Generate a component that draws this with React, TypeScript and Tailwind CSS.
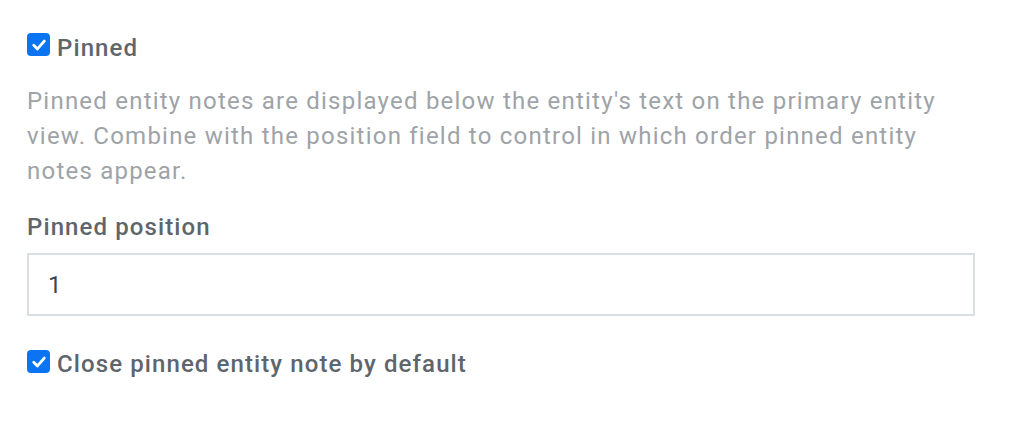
import React from "react";

function Check() {
  return (
    <span className="flex h-[23px] w-[23px] shrink-0 items-center justify-center rounded-[4px] bg-[#0b74f2]">
      <svg viewBox="0 0 16 16" className="h-[18px] w-[18px]" fill="none">
        <path d="M3.3 8.3 L6.6 11.5 L12.7 4.5" stroke="white" strokeWidth="2.5" strokeLinecap="round" strokeLinejoin="round" />
      </svg>
    </span>
  );
}

export default function App() {
  return (
    <div className="min-h-[430px] w-[1023px] bg-white pl-[27px] pr-[48px] pt-[33px] font-['Roboto',sans-serif]">
      <label className="flex items-start gap-[7px]">
        <Check />
        <span className="mt-[3px] text-[24px] font-medium leading-[24px] tracking-[1.1px] text-[#5e666c]">Pinned</span>
      </label>
      <p className="mt-[24px] text-[24px] leading-[35px] tracking-[1.22px] text-[#9ea3a8]">
        Pinned entity notes are displayed below the entity's text on the primary entity view. Combine with the position field to control in which order pinned entity notes appear.
      </p>
      <div className="mt-[26px] text-[24px] font-medium leading-[24px] tracking-[1.1px] text-[#5e666c]">Pinned position</div>
      <div className="mt-[14px] flex h-[63px] items-center border-2 border-[#d9dee2] pl-[19px] text-[24px] leading-[24px] tracking-[1px] text-[#3f464b]">
        1
      </div>
      <label className="mt-[34px] flex items-start gap-[7px]">
        <Check />
        <span className="mt-[2px] text-[24px] font-medium leading-[24px] tracking-[1.1px] text-[#5e666c]">Close pinned entity note by default</span>
      </label>
    </div>
  );
}
